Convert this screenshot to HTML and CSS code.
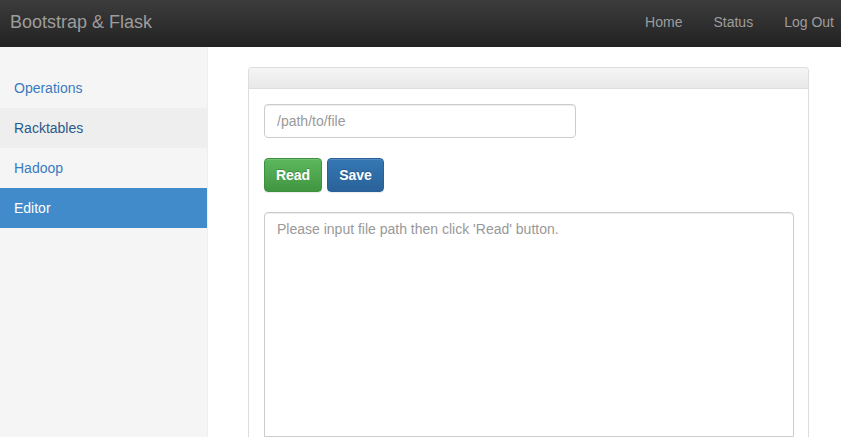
FILE: index.html
```html
<!DOCTYPE html>
<html>
<head>
<meta charset="utf-8">
<link rel="stylesheet" href="styles.css">
</head>
<body>
<nav class="navbar">
  <a class="brand" href="#">Bootstrap &amp; Flask</a>
  <ul class="nav-right">
    <li><a href="#">Home</a></li>
    <li><a href="#">Status</a></li>
    <li><a href="#">Log Out</a></li>
  </ul>
</nav>
<div class="layout">
  <aside class="sidebar">
    <ul class="side-nav">
      <li><a href="#">Operations</a></li>
      <li class="hover"><a href="#">Racktables</a></li>
      <li><a href="#">Hadoop</a></li>
      <li class="active"><a href="#">Editor</a></li>
    </ul>
  </aside>
  <main class="main">
    <div class="panel">
      <div class="panel-heading"></div>
      <div class="panel-body">
        <input class="path-input" type="text" placeholder="/path/to/file">
        <div class="btn-row">
          <button class="btn btn-read">Read</button>
          <button class="btn btn-save">Save</button>
        </div>
        <textarea class="editor" placeholder="Please input file path then click 'Read' button."></textarea>
      </div>
    </div>
  </main>
</div>
</body>
</html>
```
FILE: styles.css
```css
* { box-sizing: border-box; }
html, body { margin: 0; padding: 0; height: 100%; overflow: hidden; }
body {
  font-family: "Liberation Sans", Arial, sans-serif;
  font-size: 14px;
  line-height: 20px;
  color: #333;
  background: #fff;
}
a { text-decoration: none; }
ul { list-style: none; margin: 0; padding: 0; }

.navbar {
  height: 47px;
  display: flex;
  align-items: center;
  justify-content: space-between;
  background: linear-gradient(to bottom, #3c3c3c 0%, #222 100%);
  padding: 0 7px 0 10px;
}
.brand {
  color: #9d9d9d;
  font-size: 18px;
  line-height: 20px;
  margin-top: -3px;
}
.nav-right { display: flex; gap: 31px; margin-top: -3px; }
.nav-right a { color: #9d9d9d; font-size: 14px; }

.layout { display: flex; height: calc(100% - 47px); }
.sidebar {
  width: 208px;
  flex: none;
  background: #f5f5f5;
  border-right: 1px solid #eee;
  padding-top: 21px;
}
.side-nav a {
  display: block;
  padding: 10px 14px;
  color: #3a7bbf;
}
.side-nav li.hover a { background: #eee; color: #2a5a8a; }
.side-nav li.active a { background: #428bca; color: #fff; }

.main { flex: 1; padding: 20px 32px 0 40px; }
.panel {
  width: 561px;
  border: 1px solid #ddd;
  border-radius: 4px 4px 0 0;
  border-bottom: none;
  height: 100%;
  display: flex;
  flex-direction: column;
}
.panel-heading {
  height: 21px;
  background: linear-gradient(to bottom, #f5f5f5 0%, #e8e8e8 100%);
  border-bottom: 1px solid #ddd;
  border-radius: 3px 3px 0 0;
}
.panel-body { padding: 15px 15px 0 15px; flex: 1; display: flex; flex-direction: column; }
.path-input {
  width: 312px;
  height: 34px;
  border: 1px solid #ccc;
  border-radius: 4px;
  padding: 6px 12px;
  font-family: inherit;
  font-size: 14px;
  color: #555;
  box-shadow: inset 0 1px 1px rgba(0,0,0,.075);
}
.path-input::placeholder { color: #999; }
.btn-row { display: flex; gap: 5px; margin-top: 20px; }
.btn {
  height: 34px;
  border-radius: 4px;
  font-family: inherit;
  font-size: 14px;
  font-weight: bold;
  color: #fff;
  padding: 6px 10px;
  text-shadow: 0 -1px 0 rgba(0,0,0,.2);
  box-shadow: inset 0 1px 0 rgba(255,255,255,.15), 0 1px 1px rgba(0,0,0,.075);
}
.btn-read {
  width: 58px;
  background: linear-gradient(to bottom, #5cb85c 0%, #419641 100%);
  border: 1px solid #3e8f3e;
}
.btn-save {
  width: 57px;
  background: linear-gradient(to bottom, #3577b4 0%, #2a6299 100%);
  border: 1px solid #28609a;
}
.editor {
  margin-top: 20px;
  flex: 1;
  width: 530px;
  border: 1px solid #ccc;
  border-radius: 4px 4px 0 0;
  padding: 6px 12px;
  font-family: inherit;
  font-size: 14px;
  line-height: 20px;
  resize: none;
  box-shadow: inset 0 1px 1px rgba(0,0,0,.075);
}
.editor::placeholder { color: #999; }
```
